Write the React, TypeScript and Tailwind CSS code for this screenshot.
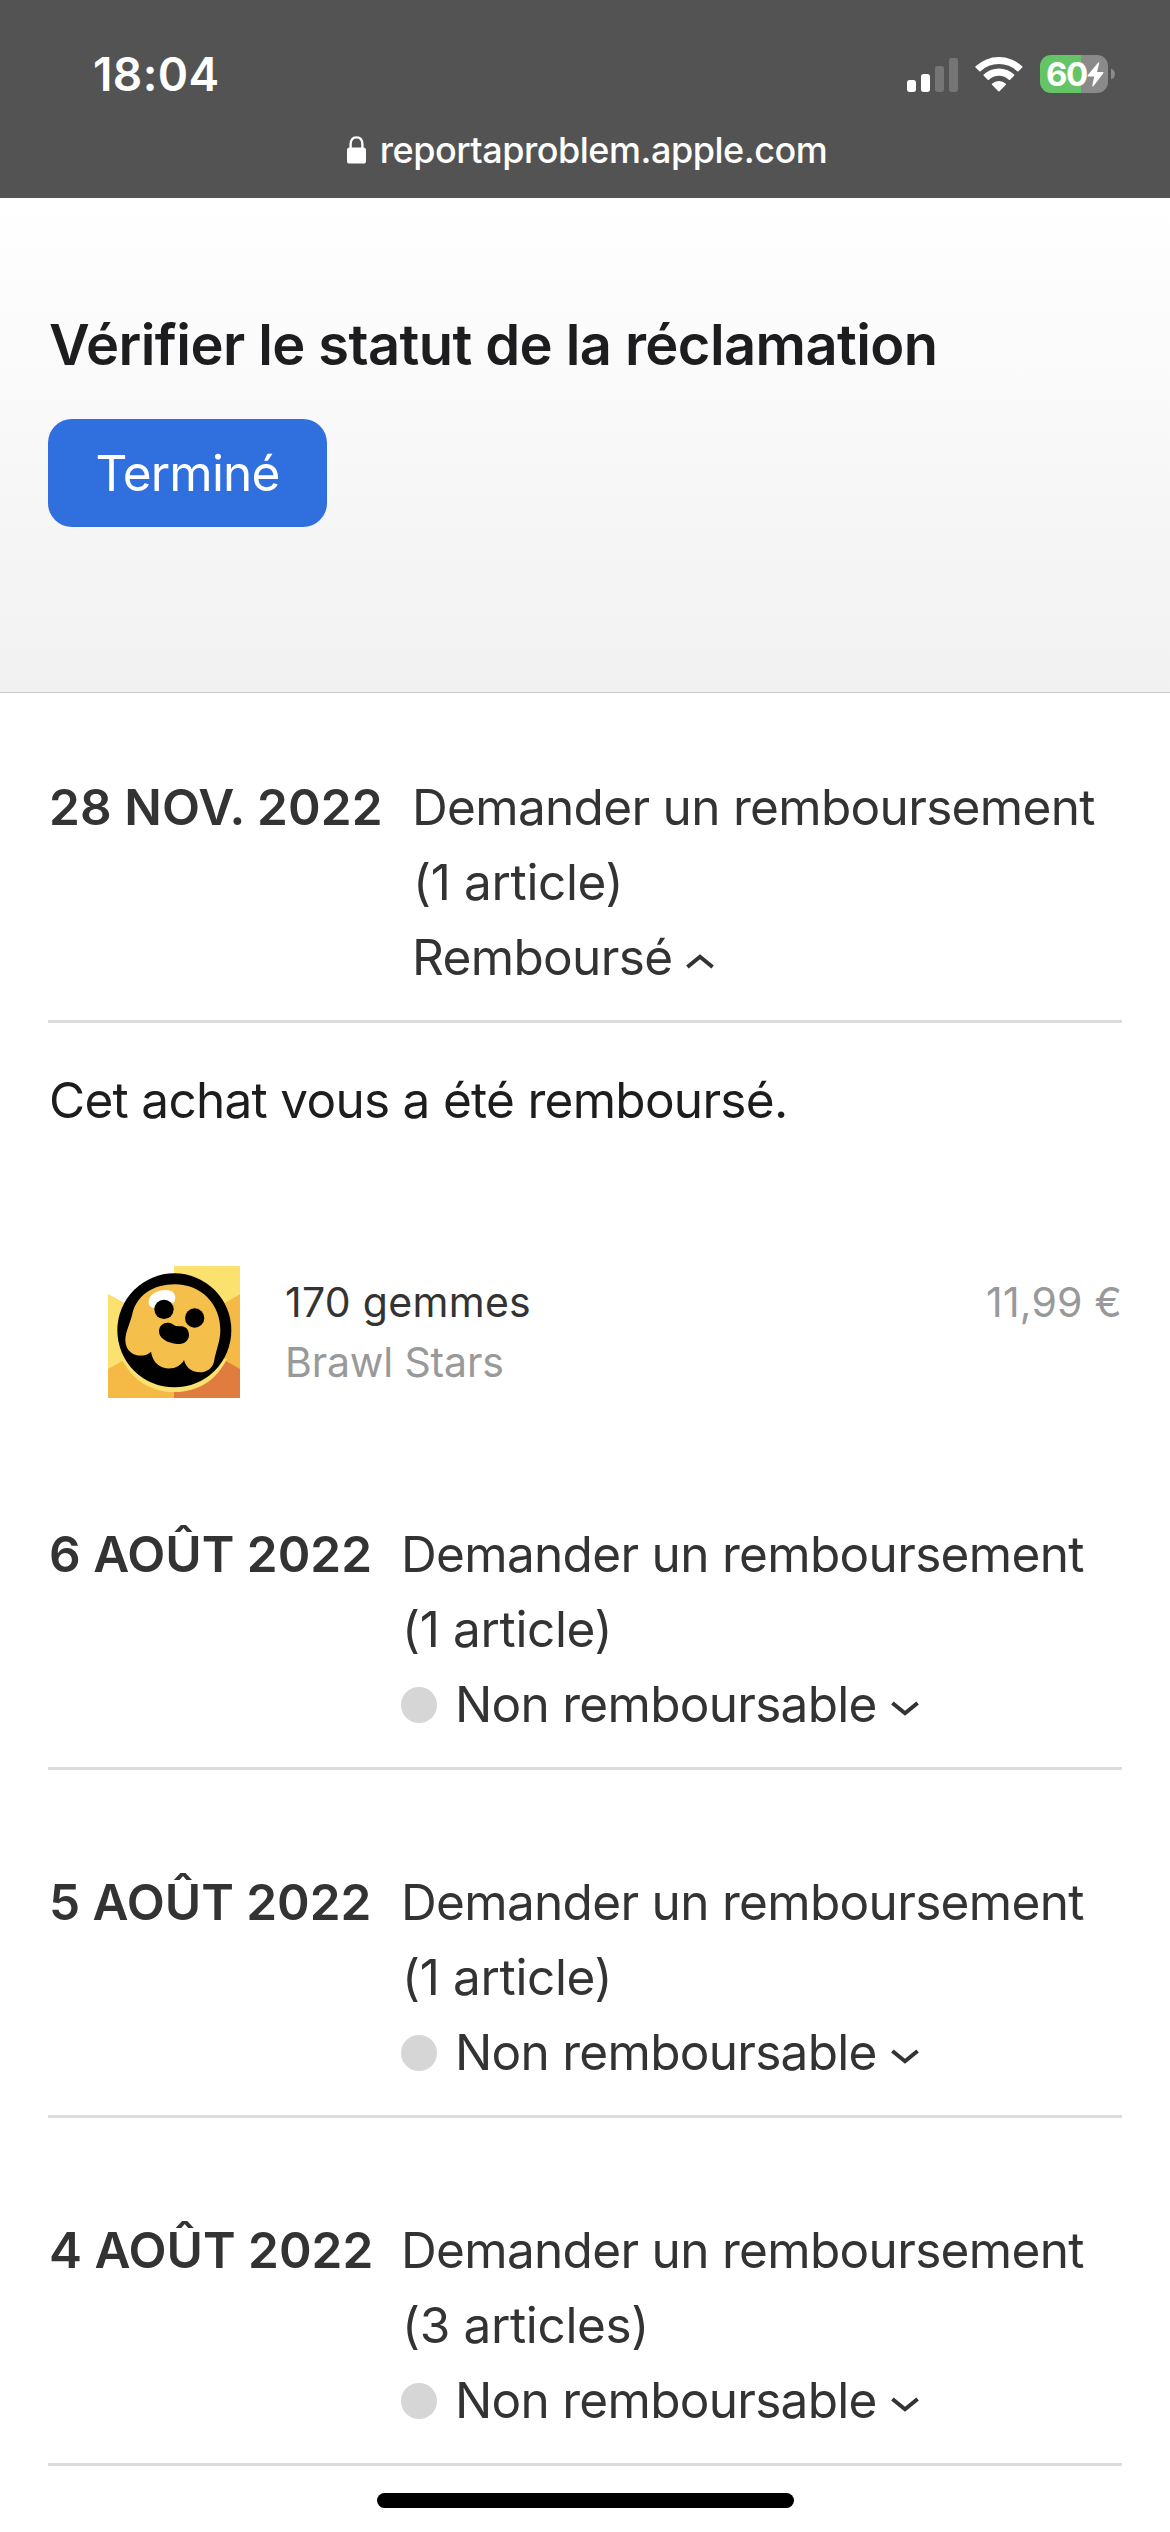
interface Claim {
  id: string;
  date: string;
  articles: string;
  refunded?: boolean;
}

const claims: Claim[] = [
  { id: "nov28", date: "28 NOV. 2022", articles: "(1 article)", refunded: true },
  { id: "aug6", date: "6 AOÛT 2022", articles: "(1 article)" },
  { id: "aug5", date: "5 AOÛT 2022", articles: "(1 article)" },
  { id: "aug4", date: "4 AOÛT 2022", articles: "(3 articles)" },
];

function SignalIcon() {
  return (
    <svg className="h-9 w-[51px]" viewBox="0 0 51 36" fill="#fff">
      <rect x="0" y="24" width="9" height="12" rx="2.7" />
      <rect x="14" y="18" width="9" height="18" rx="2.7" />
      <rect x="28" y="10" width="9" height="26" rx="2.7" fillOpacity="0.2" />
      <rect x="42" y="2" width="9" height="34" rx="2.7" fillOpacity="0.2" />
    </svg>
  );
}

function WifiIcon() {
  return (
    <svg className="h-9 w-12" viewBox="0 0 49 36" fill="#fff">
      <path d="M.6 10.2A34.5 34.5 0 0 1 48.2 10.2Q48.8 10.8 48.2 11.4L44.4 15.2Q43.8 15.8 43.1 15.2A27 27 0 0 0 5.7 15.2Q5 15.8 4.4 15.2L.6 11.4Q0 10.8.6 10.2Z" />
      <path d="M8.9 18.6A22.6 22.6 0 0 1 39.9 18.6Q40.5 19.2 39.9 19.8L35.8 23.8Q35.2 24.4 34.5 23.8A15 15 0 0 0 14.3 23.8Q13.6 24.4 13 23.8L8.9 19.8Q8.3 19.2 8.9 18.6Z" />
      <path d="M17.3 28A10.5 10.5 0 0 1 31.5 28Q32 28.6 31.5 29.1L25 35.6Q24.4 36.2 23.8 35.6L17.3 29.1Q16.8 28.6 17.3 28Z" />
    </svg>
  );
}

function Battery() {
  return (
    <div className="flex items-center">
      <div className="flex h-[38px] w-[68px] items-center rounded-[11px] bg-[linear-gradient(90deg,#65c466_60.5%,#8a8a8a_60.5%)] pl-[6px]">
        <span className="w-[41px] text-[33px] leading-[38px] font-bold tracking-[-1.5px] whitespace-nowrap">60</span>
        <svg className="h-[25px] w-[17px]" viewBox="0 0 17 25" fill="#fff">
          <path d="M11.2.6Q12.5-.2 12.2 1.2L10 10H15.8Q17 10.1 16.3 11.2L6.6 24Q5.2 25.2 5.3 23.6L7.2 14.6H1.3Q0 14.5.7 13.3Z" />
        </svg>
      </div>
      <svg className="ml-[3px] h-3 w-1" viewBox="0 0 4 12" fill="#8a8a8a">
        <path d="M0 0.5Q4 2 4 6T0 11.5Z" />
      </svg>
    </div>
  );
}

function LockIcon() {
  return (
    <svg className="h-7 w-[19px]" viewBox="0 0 19 28">
      <path d="M3.6 13V8.5Q3.6 1.4 9.5 1.4T15.4 8.5V13" fill="none" stroke="#fff" strokeWidth="2.4" />
      <rect x="0" y="11.5" width="19" height="16" rx="2.6" fill="#fff" />
    </svg>
  );
}

function Chevron({ up }: { up?: boolean }) {
  return (
    <svg className="mt-2 h-[15px] w-7" viewBox="0 0 28 15" fill="none" stroke="#333" strokeWidth="4">
      <path d={up ? "M1.4 13L14 2.8L26.6 13" : "M1.4 2L14 12.2L26.6 2"} />
    </svg>
  );
}

function GameIcon() {
  return (
    <svg className="h-[132px] w-[132px]" viewBox="54 48 396 396">
      <rect x="54" y="48" width="396" height="396" fill="#f5b945" />
      <path d="M54 48H252V241L54 133Z" fill="#fff" />
      <path d="M252 48H450V133L252 245Z" fill="#fbe26f" />
      <path d="M54 133L252 245L54 357Z" fill="#fbe26f" />
      <path d="M252 245L450 357V444H252Z" fill="#df7c3e" />
      <path d="M95 326C125 388 180 426 253 426C326 426 381 388 411 326Z" fill="#fbe26f" />
      <circle cx="253" cy="241" r="171" fill="#000" />
      <path
        d="M106 272C106 245 120 222 127 192C140 136 190 103 254 103C335 103 391 163 391 240C391 275 378 300 372 335C362 379 292 377 282 330C264 367 192 368 183 305C161 327 108 319 106 272Z"
        fill="#f5bf4b"
      />
      <path d="M176 158C174 134 202 119 229 120C254 121 262 141 251 158L215 172L192 174C183 172 177 168 176 158Z" fill="#fff" />
      <circle cx="222" cy="178" r="29" />
      <circle cx="314" cy="204" r="29" />
      <path d="M207 243C208 222 231 212 248 223C258 231 266 228 276 229C291 231 298 244 297 257C295 274 280 283 262 282C232 279 206 265 207 243Z" />
    </svg>
  );
}

function StatusBar() {
  return (
    <header className="flex h-[198px] flex-col bg-[#535353] text-white">
      <div className="mt-[44px] flex h-[60px] items-center justify-between pr-[55px] pl-[93px]">
        <span className="text-[46px] leading-[60px] font-semibold tracking-[0.4px]">18:04</span>
        <div className="flex items-center gap-[17px]">
          <SignalIcon />
          <WifiIcon />
          <Battery />
        </div>
      </div>
      <div className="mt-[22px] flex h-12 items-center justify-center gap-[14px] pl-1">
        <LockIcon />
        <span className="text-[36px] leading-[48px] font-medium tracking-[-0.48px]">reportaproblem.apple.com</span>
      </div>
    </header>
  );
}

function ClaimRow({ claim }: { claim: Claim }) {
  return (
    <div className="flex h-[253px] border-b-[3px] border-[#dcdcdc] text-[49.5px] leading-[75px] whitespace-nowrap text-[#333]">
      <div className={claim.refunded ? "w-[364px] pl-px font-semibold tracking-[0.1px]" : "w-[353px] pl-px font-semibold"}>
        {claim.date}
      </div>
      <div>
        <div className="tracking-[-0.68px]">Demander un remboursement</div>
        <div className="pl-px tracking-[-0.35px]">{claim.articles}</div>
        {claim.refunded ? (
          <div className="flex items-center gap-[14px] tracking-[-0.65px]">
            Remboursé
            <Chevron up />
          </div>
        ) : (
          <div className="flex items-center tracking-[-0.72px]">
            <span className="mr-[18px] h-9 w-9 rounded-full bg-[#d6d6d6]" />
            <span className="mr-[14px]">Non remboursable</span>
            <Chevron />
          </div>
        )}
      </div>
    </div>
  );
}

function RefundDetails() {
  return (
    <>
      <p className="mt-10 pl-px text-[49.5px] leading-[75px] tracking-[-0.71px] text-[#1d1d1f]">
        Cet achat vous a été remboursé.
      </p>
      <div className="mt-32 mb-[24px] flex pl-[60px]">
        <GameIcon />
        <div className="mt-1.5 ml-[45px] flex-1 text-[41px] leading-[60px]">
          <div className="tracking-[0.3px] text-[#333]">170 gemmes</div>
          <div className="tracking-[-0.15px] text-[#999]">Brawl Stars</div>
        </div>
        <div className="mt-1.5 text-[41px] leading-[60px] tracking-[0.2px] text-[#999]">11,99 €</div>
      </div>
    </>
  );
}

export default function App() {
  return (
    <div className="flex h-[2532px] w-[1170px] flex-col overflow-hidden bg-white font-['Inter',sans-serif]">
      <StatusBar />
      <section className="h-[495px] border-b border-[#c8c8c8] bg-linear-to-b from-white to-[#f1f1f1] px-12 pt-[113px]">
        <h1 className="pl-px text-[56px] leading-[68px] font-semibold tracking-[-0.57px] text-[#1d1d1f]">
          Vérifier le statut de la réclamation
        </h1>
        <button className="mt-10 h-[108px] w-[279px] rounded-3xl bg-[#2f6fde] text-[49.5px] tracking-[-0.8px] text-white">
          Terminé
        </button>
      </section>
      <main className="h-[1773px] px-12 pt-[77px]">
        <div className="flex flex-col gap-[95px]">
          {claims.map((claim) => (
            <div key={claim.id}>
              <ClaimRow claim={claim} />
              {claim.refunded && <RefundDetails />}
            </div>
          ))}
        </div>
      </main>
      <footer className="flex justify-center pt-[27px]">
        <div className="h-[15px] w-[417px] rounded-full bg-black" />
      </footer>
    </div>
  );
}
